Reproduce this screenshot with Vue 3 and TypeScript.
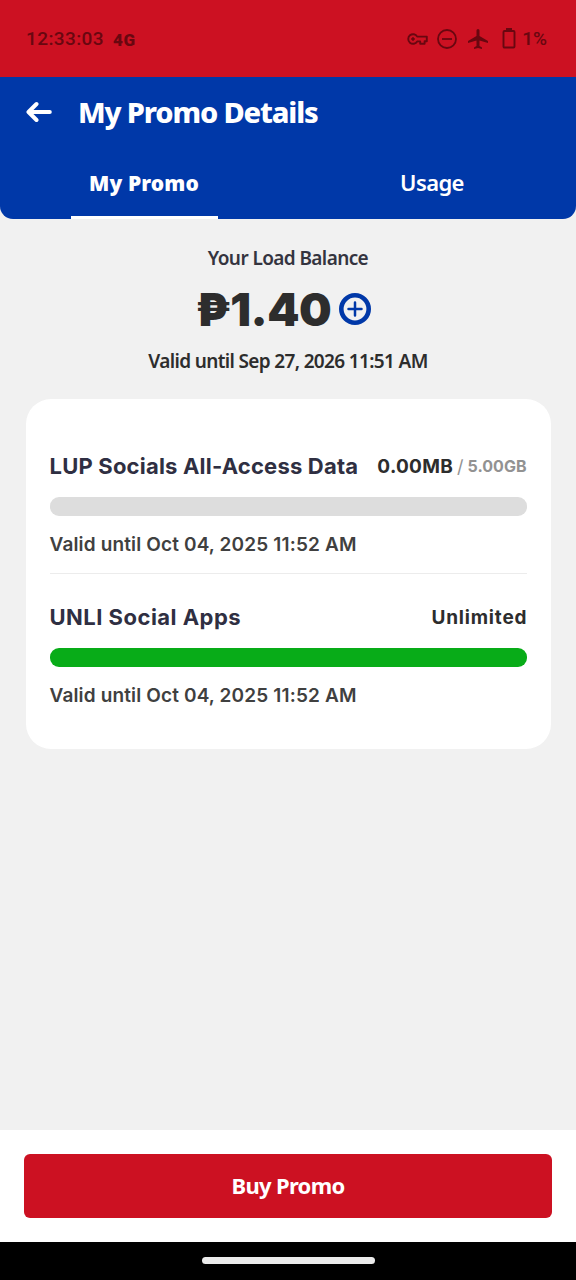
<script setup lang="ts">
interface Allowance {
  name: string
  used: string
  total?: string
  percent: number
  expiry: string
}

const allowances: Allowance[] = [
  { name: 'LUP Socials All-Access Data', used: '0.00MB', total: '5.00GB', percent: 0, expiry: 'Valid until Oct 04, 2025 11:52 AM' },
  { name: 'UNLI Social Apps', used: 'Unlimited', percent: 100, expiry: 'Valid until Oct 04, 2025 11:52 AM' },
]
</script>

<template>
  <div class="screen">
    <div class="status">
      <span class="clock">12:33:03</span>
      <span class="network">4G</span>
      <div class="status-icons">
        <svg class="key" width="21" height="12" viewBox="0 0 21 12" fill="none" stroke="currentColor" stroke-width="1.9" stroke-linejoin="round">
          <path d="M10.2 3.6A4.8 4.8 0 1 0 10.2 8.4H13.2V10.8H17.6V8.2H19.8V3.6Z" />
          <circle cx="6" cy="6" r="1.3" fill="currentColor" stroke-width="1" />
        </svg>
        <svg class="dnd" width="20" height="20" viewBox="0 0 20 20" fill="none" stroke="currentColor" stroke-width="1.8">
          <circle cx="10" cy="10" r="9" />
          <path d="M5 10H15" />
        </svg>
        <svg class="plane" width="20" height="20" viewBox="2 2 20 20" fill="currentColor">
          <path d="M22 16v-2l-8.500-5V3.500a1.500 1.500 0 0 0-3 0V9L2 14v2l8.500-2.500V19L8 20.500V22l4-1 4 1v-1.500L13.500 19v-5.500z" />
        </svg>
        <svg class="battery" width="14" height="21" viewBox="0 0 14 21">
          <rect x="1.500" y="3" width="11" height="16.500" rx="1" fill="none" stroke="currentColor" stroke-width="1.900" />
          <rect x="4" y="0" width="6" height="3" fill="currentColor" />
        </svg>
        <span class="charge">1%</span>
      </div>
    </div>

    <header class="header">
      <div class="title-row">
        <svg width="26" height="22" viewBox="0 0 26 22" fill="none" stroke="#fff" stroke-width="4" stroke-linecap="round" stroke-linejoin="round">
          <path d="M23.800 11H3M10.500 3L2.500 11L10.500 19" />
        </svg>
        <h1>My Promo Details</h1>
      </div>
      <nav class="tabs">
        <a class="tab active"><span>My Promo</span></a>
        <a class="tab"><span>Usage</span></a>
      </nav>
    </header>

    <main class="content">
      <section class="balance">
        <p class="label">Your Load Balance</p>
        <div class="amount-row">
          <span class="amount">₱1.40</span>
          <svg width="32" height="32" viewBox="0 0 32 32" fill="none" stroke="#0038a8">
            <circle cx="16" cy="16" r="13.700" stroke-width="4.600" />
            <path d="M16 9.500V22.500M9.500 16H22.500" stroke-width="2.500" stroke-linecap="round" />
          </svg>
        </div>
        <p class="validity">Valid until Sep 27, 2026 11:51 AM</p>
      </section>

      <section class="card">
        <article v-for="item in allowances" :key="item.name" class="allowance">
          <div class="row">
            <h2>{{ item.name }}</h2>
            <div class="quota">
              <span class="used" :class="{ unlimited: !item.total }">{{ item.used }}</span>
              <template v-if="item.total">
                <span class="slash">/</span><span class="total">{{ item.total }}</span>
              </template>
            </div>
          </div>
          <div class="track"><div class="fill" :style="{ width: item.percent + '%' }"></div></div>
          <p class="expiry">{{ item.expiry }}</p>
        </article>
      </section>
    </main>

    <footer class="footer"><button type="button">Buy Promo</button></footer>
    <div class="gesture"><div class="pill"></div></div>
  </div>
</template>

<style>
body {
  margin: 0;
}
</style>

<style scoped>
* {
  box-sizing: border-box;
}
h1,
h2,
p {
  margin: 0;
}
.screen {
  display: flex;
  flex-direction: column;
  width: 576px;
  height: 1280px;
  overflow: hidden;
  background: #f1f1f1;
  font-family: "Noto Sans", "Open Sans", sans-serif;
  white-space: nowrap;
}
.status {
  display: flex;
  align-items: center;
  height: 77px;
  padding: 0 29px 0 26px;
  background: #cc1122;
  color: #690710;
  font-family: Roboto, sans-serif;
}
.clock {
  font-size: 19px;
  font-weight: 500;
  letter-spacing: 0.4px;
}
.network {
  margin: 3px 0 0 9px;
  font-size: 17px;
  font-weight: 900;
  letter-spacing: 0.6px;
}
.status-icons {
  display: flex;
  align-items: center;
  margin-left: auto;
}
.key {
  margin-right: 9px;
}
.dnd {
  margin-right: 11px;
}
.plane {
  margin-right: 14px;
}
.battery {
  margin-right: 6px;
}
.charge {
  font-size: 19px;
  font-weight: 500;
}
.header {
  height: 142px;
  background: #0038a8;
  border-radius: 0 0 13px 13px;
  color: #fff;
}
.title-row {
  display: flex;
  align-items: center;
  height: 70px;
  padding-left: 26px;
}
.title-row h1 {
  margin: -1px 0 0 26px;
  font-size: 29px;
  line-height: 40px;
  font-weight: 800;
  letter-spacing: -1.15px;
}
.tabs {
  display: grid;
  grid-template-columns: 1fr 1fr;
  height: 72px;
}
.tab {
  display: flex;
  align-items: center;
  justify-content: center;
  justify-self: center;
  width: 147px;
  border-bottom: 3px solid transparent;
  font-size: 22px;
  font-weight: 600;
  letter-spacing: -0.6px;
}
.tab.active {
  padding-top: 2px;
  border-color: #fff;
  font-size: 21px;
  font-weight: 900;
  letter-spacing: 0.1px;
}
.content {
  height: 911px;
}
.balance {
  display: flex;
  flex-direction: column;
  align-items: center;
  height: 180px;
  padding-top: 25px;
}
.label,
.validity {
  font-size: 19px;
  line-height: 28px;
  font-weight: 600;
  letter-spacing: -0.6px;
  color: #34343f;
}
.validity {
  letter-spacing: -0.65px;
  color: #2d2d2d;
}
.amount-row {
  display: flex;
  align-items: center;
  gap: 8px;
  height: 75px;
  padding: 0 9px 2px 0;
}
.amount {
  font-family: Inter, sans-serif;
  font-size: 46px;
  line-height: 60px;
  font-weight: 900;
  letter-spacing: -0.5px;
  color: #2d2d2d;
}
.card {
  width: 525px;
  height: 350px;
  margin: 0 auto;
  padding: 25px 24px 0;
  background: #fff;
  border-radius: 25px;
  font-family: Inter, "Noto Sans", sans-serif;
}
.allowance {
  height: 149px;
  padding-top: 26px;
}
.allowance + .allowance {
  height: 151px;
  padding-top: 27px;
  border-top: 1px solid #ececec;
}
.row {
  display: flex;
  align-items: center;
  justify-content: space-between;
  height: 32px;
}
h2 {
  font-size: 22px;
  font-weight: 700;
  letter-spacing: 0.2px;
  color: #2f2f42;
}
.allowance + .allowance h2 {
  letter-spacing: 0.48px;
}
.quota {
  display: flex;
  align-items: center;
  color: #2d2d2d;
}
.used {
  font-size: 19px;
  font-weight: 700;
  letter-spacing: 0.3px;
}
.used.unlimited {
  margin-right: -0.8px;
  letter-spacing: 0.8px;
}
.slash {
  margin: 0 4px;
  font-size: 18px;
  color: #929292;
}
.total {
  font-size: 16px;
  font-weight: 700;
  color: #929292;
}
.track {
  height: 19px;
  margin-top: 15px;
  overflow: hidden;
  border-radius: 9px;
  background: #ddd;
}
.fill {
  height: 100%;
  background: #08ac18;
}
.expiry {
  margin-top: 16px;
  font-size: 19px;
  line-height: 26px;
  font-weight: 600;
  letter-spacing: 0.15px;
  color: #404040;
}
.footer {
  height: 112px;
  padding: 24px;
  background: #fff;
}
.footer button {
  display: block;
  width: 100%;
  height: 64px;
  padding: 0 0 3px;
  border: 0;
  border-radius: 6px;
  background: #cc1122;
  color: #fff;
  font: 700 22px "Noto Sans", sans-serif;
  letter-spacing: -0.7px;
}
.gesture {
  display: flex;
  justify-content: center;
  height: 38px;
  padding-top: 15px;
  background: #000;
}
.pill {
  width: 173px;
  height: 7px;
  border-radius: 4px;
  background: #ebebeb;
}
</style>
